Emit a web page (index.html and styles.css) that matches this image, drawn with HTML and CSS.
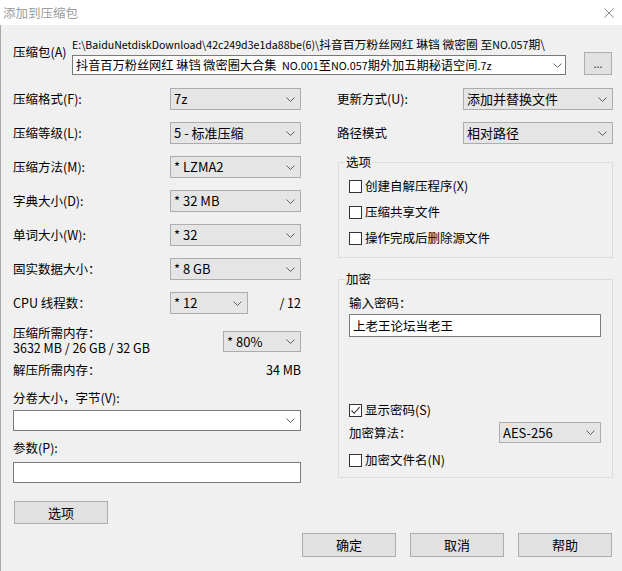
FILE: index.html
```html
<!DOCTYPE html>
<html lang="zh-CN">
<head>
<meta charset="utf-8">
<title>添加到压缩包</title>
<link rel="stylesheet" href="styles.css">
</head>
<body>
<div class="window">
  <div class="titlebar">
    <span class="title">添加到压缩包</span>
    <svg class="close" width="10" height="10" viewBox="0 0 10 10"><path d="M0.5 0.5 L9.5 9.5 M9.5 0.5 L0.5 9.5" stroke="#8c8c8c" stroke-width="1" fill="none"/></svg>
  </div>
  <div class="content">
    <div class="archive">
      <div class="archive-label">压缩包(A)</div>
      <div class="archive-main">
        <div class="path"><span class="lat">E:\BaiduNetdiskDownload\42c249d3e1da88be(6)\</span>抖音百万粉丝网红 琳铛 微密圈 至<span class="lat">NO.057</span>期\</div>
        <div class="archive-row">
          <div class="combo edit archive-combo"><span class="val">抖音百万粉丝网红 琳铛 微密圈大合集&nbsp; <span class="lat">NO.001</span>至<span class="lat">NO.057</span>期外加五期秘语空间<span class="lat">.7z</span></span><svg class="chev" width="9" height="5" viewBox="0 0 9 5"><path d="M0.5 0.5 L4.5 4.5 L8.5 0.5" stroke="#606060" stroke-width="1" fill="none"/></svg></div>
          <div class="btn browse">...</div>
        </div>
      </div>
    </div>

    <div class="columns">
      <div class="col-left">
        <div class="row"><span class="lbl">压缩格式(F):</span><div class="combo"><span class="val">7z</span><svg class="chev" width="9" height="5" viewBox="0 0 9 5"><path d="M0.5 0.5 L4.5 4.5 L8.5 0.5" stroke="#606060" stroke-width="1" fill="none"/></svg></div></div>
        <div class="row"><span class="lbl">压缩等级(L):</span><div class="combo"><span class="val">5 - 标准压缩</span><svg class="chev" width="9" height="5" viewBox="0 0 9 5"><path d="M0.5 0.5 L4.5 4.5 L8.5 0.5" stroke="#606060" stroke-width="1" fill="none"/></svg></div></div>
        <div class="row"><span class="lbl">压缩方法(M):</span><div class="combo"><span class="val">* LZMA2</span><svg class="chev" width="9" height="5" viewBox="0 0 9 5"><path d="M0.5 0.5 L4.5 4.5 L8.5 0.5" stroke="#606060" stroke-width="1" fill="none"/></svg></div></div>
        <div class="row"><span class="lbl">字典大小(D):</span><div class="combo"><span class="val">* 32 MB</span><svg class="chev" width="9" height="5" viewBox="0 0 9 5"><path d="M0.5 0.5 L4.5 4.5 L8.5 0.5" stroke="#606060" stroke-width="1" fill="none"/></svg></div></div>
        <div class="row"><span class="lbl">单词大小(W):</span><div class="combo"><span class="val">* 32</span><svg class="chev" width="9" height="5" viewBox="0 0 9 5"><path d="M0.5 0.5 L4.5 4.5 L8.5 0.5" stroke="#606060" stroke-width="1" fill="none"/></svg></div></div>
        <div class="row"><span class="lbl">固实数据大小：</span><div class="combo"><span class="val">* 8 GB</span><svg class="chev" width="9" height="5" viewBox="0 0 9 5"><path d="M0.5 0.5 L4.5 4.5 L8.5 0.5" stroke="#606060" stroke-width="1" fill="none"/></svg></div></div>
        <div class="row"><span class="lbl">CPU 线程数：</span><div class="combo small"><span class="val">* 12</span><svg class="chev" width="9" height="5" viewBox="0 0 9 5"><path d="M0.5 0.5 L4.5 4.5 L8.5 0.5" stroke="#606060" stroke-width="1" fill="none"/></svg></div><span class="max">/ 12</span></div>
        <div class="mem">
          <div class="mem-text"><div>压缩所需内存：</div><div>3632 MB / 26 GB / 32 GB</div></div>
          <div class="combo small mem-combo"><span class="val">* 80%</span><svg class="chev" width="9" height="5" viewBox="0 0 9 5"><path d="M0.5 0.5 L4.5 4.5 L8.5 0.5" stroke="#606060" stroke-width="1" fill="none"/></svg></div>
        </div>
        <div class="decomp"><span>解压所需内存：</span><span>34 MB</span></div>
        <div class="vol-label">分卷大小，字节(V):</div>
        <div class="combo edit vol-combo"><span class="val"></span><svg class="chev" width="9" height="5" viewBox="0 0 9 5"><path d="M0.5 0.5 L4.5 4.5 L8.5 0.5" stroke="#606060" stroke-width="1" fill="none"/></svg></div>
        <div class="param-label">参数(P):</div>
        <div class="textbox param-input"></div>
        <div class="btn opt-btn">选项</div>
      </div>

      <div class="col-right">
        <div class="row"><span class="lbl-r">更新方式(U):</span><div class="combo wide"><span class="val">添加并替换文件</span><svg class="chev" width="9" height="5" viewBox="0 0 9 5"><path d="M0.5 0.5 L4.5 4.5 L8.5 0.5" stroke="#606060" stroke-width="1" fill="none"/></svg></div></div>
        <div class="row"><span class="lbl-r">路径模式</span><div class="combo wide"><span class="val">相对路径</span><svg class="chev" width="9" height="5" viewBox="0 0 9 5"><path d="M0.5 0.5 L4.5 4.5 L8.5 0.5" stroke="#606060" stroke-width="1" fill="none"/></svg></div></div>

        <fieldset class="group group-options">
          <legend>选项</legend>
          <div class="check first"><span class="box"></span><span>创建自解压程序(X)</span></div>
          <div class="check"><span class="box"></span><span>压缩共享文件</span></div>
          <div class="check"><span class="box"></span><span>操作完成后删除源文件</span></div>
        </fieldset>

        <fieldset class="group group-encrypt">
          <legend>加密</legend>
          <div class="pw-label">输入密码：</div>
          <div class="textbox pw-input">上老王论坛当老王</div>
          <div class="check show-pw"><span class="box"><svg width="11" height="11" viewBox="0 0 11 11"><path d="M1.5 5.5 L4.2 8.3 L9.6 2.2" stroke="#333" stroke-width="1.1" fill="none"/></svg></span><span>显示密码(S)</span></div>
          <div class="algo-row"><span>加密算法：</span><div class="combo algo-combo"><span class="val">AES-256</span><svg class="chev" width="9" height="5" viewBox="0 0 9 5"><path d="M0.5 0.5 L4.5 4.5 L8.5 0.5" stroke="#606060" stroke-width="1" fill="none"/></svg></div></div>
          <div class="check enc-names"><span class="box"></span><span>加密文件名(N)</span></div>
        </fieldset>
      </div>
    </div>

    <div class="footer">
      <div class="btn action">确定</div>
      <div class="btn action">取消</div>
      <div class="btn action">帮助</div>
    </div>
  </div>
</div>
</body>
</html>
```

FILE: styles.css
```css
* { box-sizing: border-box; }
html, body { margin: 0; padding: 0; }
body {
  width: 622px;
  height: 571px;
  overflow: hidden;
  background: #f0f0f0;
  font-family: "Noto Sans CJK SC", sans-serif;
  font-size: 12.5px;
  line-height: 16px;
  color: #000;
}
.window { width: 622px; height: 571px; display: flex; flex-direction: column; }

.titlebar {
  height: 25px;
  flex-shrink: 0;
  background: #fff;
  display: flex;
  align-items: center;
  justify-content: space-between;
  padding: 0 8px 0 3px;
}
.title { color: #9c9c9c; font-size: 12.5px; }
.close { display: block; }

.content {
  flex: 1;
  border-left: 1px solid #a9a9a9;
  padding: 10px 9px 0 12px;
}

/* generic controls */
.combo {
  display: flex;
  align-items: center;
  justify-content: space-between;
  width: 131px;
  height: 22px;
  border: 1px solid #adadad;
  background: #e5e5e5;
  padding: 0 5px 0 3px;
  font-size: 13px;
  line-height: 16px;
  white-space: nowrap;
  flex-shrink: 0;
}
.combo.edit { background: #fff; border-color: #7a7a7a; }
.chev { display: block; flex-shrink: 0; }

.textbox {
  background: #fff;
  border: 1px solid #7a7a7a;
  padding: 0 3px;
  font-size: 12.5px;
  display: flex;
  align-items: center;
}

.btn {
  display: flex;
  align-items: center;
  justify-content: center;
  background: #e1e1e1;
  border: 1px solid #adadad;
  font-size: 13px;
}

/* archive row */
.archive { display: flex; }
.archive-label { width: 59px; flex-shrink: 0; margin-top: 9px; }
.archive-main { display: flex; flex-direction: column; width: 540px; }
.path { margin-top: 1px; height: 16px; font-size: 11.8px; white-space: nowrap; }
.path .lat { font-size: 10.6px; }
.archive-row { display: flex; align-items: flex-end; }
.combo.archive-combo { width: 494px; height: 20px; font-size: 12.2px; padding-right: 3px; }
.archive-combo .lat { font-size: 10.8px; }
.btn.browse { width: 28px; height: 23px; margin-left: 18px; font-size: 11px; color: #333; padding-bottom: 2px; }

/* columns */
.columns { display: flex; gap: 36px; margin-top: 13px; }
.col-left { width: 288px; display: flex; flex-direction: column; }
.col-right { width: 276px; display: flex; flex-direction: column; }

.row { display: flex; align-items: center; height: 22px; margin-top: 12px; }
.row:first-child { margin-top: 0; }
.lbl { width: 157px; flex-shrink: 0; }
.lbl-r { width: 126px; flex-shrink: 0; }
.combo.wide { width: 150px; }
.combo.small { width: 78px; }
.max { flex: 1; text-align: right; }

.mem { display: flex; margin-top: 11px; }
.mem-text { line-height: 15px; }
.combo.mem-combo { height: 21px; margin-top: 6px; margin-left: auto; }

.decomp { display: flex; justify-content: space-between; margin-top: 7px; }
.vol-label { margin-top: 12px; }
.combo.vol-combo { width: 288px; height: 21px; margin-top: 4px; }
.param-label { margin-top: 9px; }
.textbox.param-input { width: 288px; height: 21px; margin-top: 6px; }
.btn.opt-btn { width: 94px; height: 23px; margin-top: 18px; margin-left: 1px; }

/* group boxes */
.group {
  margin: 0 0 0 1px;
  width: 275px;
  border: 1px solid #dcdcdc;
  padding: 0 11px 11px 10px;
  min-width: 0;
}
.group legend { margin-left: -4px; padding: 0 1px; line-height: 16px; }
.group-options { margin-top: 10px; }
.group-encrypt { margin-top: 13px; padding-bottom: 9px; }

.check { display: flex; align-items: center; height: 16px; margin-top: 10px; }
.check.first { margin-top: 8px; }
.box {
  width: 13px;
  height: 13px;
  border: 1px solid #333;
  background: #fff;
  margin-right: 3px;
  flex-shrink: 0;
  display: flex;
  align-items: center;
  justify-content: center;
}
.box svg { display: block; }

.pw-label { margin-top: 8px; }
.textbox.pw-input { width: 252px; height: 23px; margin-top: 3px; }
.check.show-pw { margin-top: 65px; }
.algo-row { display: flex; align-items: center; justify-content: space-between; height: 21px; margin-top: 4px; }
.combo.algo-combo { width: 102px; height: 21px; }
.check.enc-names { margin-top: 9px; }

/* footer */
.footer { display: flex; justify-content: flex-end; gap: 14px; margin-top: 9px; padding-right: 1px; }
.btn.action { width: 94px; height: 24px; }
```
